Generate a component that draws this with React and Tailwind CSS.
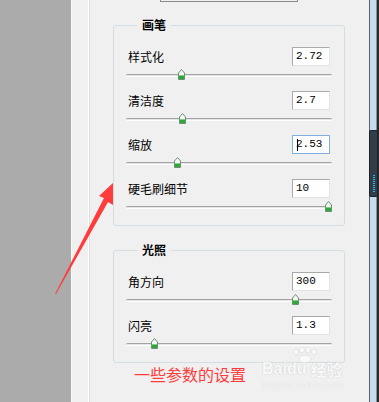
import React from "react";

const cjk = { fontFamily: '"Noto Sans CJK SC", "Noto Sans", sans-serif' };

function Thumb({ left }) {
  return (
    <svg
      width="7"
      height="11"
      viewBox="0 0 7 11"
      className="absolute top-[-6px]"
      style={{ left }}
    >
      <path d="M3.5 0.5 L6.5 4 V10.5 H0.5 V4 Z" fill="#f4f8f4" stroke="#6f8f73" />
      <rect x="1" y="6" width="5" height="4" fill="#2fa83a" />
      <rect x="1" y="6" width="5" height="1" fill="#7fd080" />
    </svg>
  );
}

function Row({ label, value, pos, focused }) {
  return (
    <div className="flex flex-col">
      <div className="flex h-[19px] items-center justify-between">
        <span className="text-[12px] leading-[12px] text-black" style={cjk}>
          {label}
        </span>
        <div
          className={`relative flex h-[19px] w-[38px] items-center bg-white pl-[3px] font-['Liberation_Mono',monospace] text-[11px] text-black border ${
            focused
              ? "border-[#7fb0e0]"
              : "border-[#a9a9a9] border-r-[#e2e2e2] border-b-[#e2e2e2]"
          }`}
        >
          {focused && <span className="absolute left-[4px] top-[3px] h-[12px] w-px bg-black" />}
          {value}
        </div>
      </div>
      <div className="h-[25px] pt-[8px]">
        <div className="relative -mx-[2px] h-[3px] rounded-full border-t border-[#a3a3a3] border-b border-b-white bg-[#e4e4e4]">
          <Thumb left={pos} />
        </div>
      </div>
    </div>
  );
}

function Group({ title, children, className = "" }) {
  return (
    <fieldset
      className={`ml-[23px] w-[232px] rounded-[3px] border border-[#d3dde4] px-[14px] pt-[16px] pb-[2px] ${className}`}
    >
      <legend
        className="ml-[9px] px-[5px] text-[12px] font-bold leading-[12px] text-black"
        style={cjk}
      >
        {title}
      </legend>
      {children}
    </fieldset>
  );
}

export default function App() {
  return (
    <div className="relative flex h-[402px] w-[379px] overflow-hidden bg-[#f0f0f0]">
      <div className="w-[71px] shrink-0 bg-[#ababab]" />
      <div className="w-px shrink-0 bg-[#fafafa]" />
      <div className="w-[16px] shrink-0 bg-[#f0f0f0]" />
      <div className="w-px shrink-0 bg-white" />
      <div className="w-px shrink-0 bg-[#dedede]" />

      <div className="flex w-[279px] shrink-0 flex-col">
        <div className="ml-[70px] h-[2px] w-[138px] border-x border-b border-[#8a8a8a]" />

        <Group title="画笔" className="mt-[17px]">
          <Row label="样式化" value="2.72" pos={52} />
          <Row label="清洁度" value="2.7" pos={53} />
          <Row label="缩放" value="2.53" pos={48} focused />
          <Row label="硬毛刷细节" value="10" pos={199} />
        </Group>

        <Group title="光照" className="mt-[18px]">
          <Row label="角方向" value="300" pos={166} />
          <Row label="闪亮" value="1.3" pos={25} />
        </Group>

        <div className="ml-[44px] mt-[1px] text-[16px] leading-[20px] text-[#ff3c3c]" style={cjk}>
          一些参数的设置
        </div>
      </div>

      <div className="w-px shrink-0 bg-[#56606a]" />
      <div className="w-[6px] shrink-0 bg-[#c6daf0]" />
      <div className="w-px shrink-0 bg-[#8a8a8a]" />
      <div className="w-[2px] shrink-0 bg-[#2a2a2a]" />

      {/* scrollbar thumb */}
      <div className="absolute left-[369px] top-[130px] flex h-[67px] w-[9px] flex-col items-center rounded-[2px] border border-[#1c232a] bg-[#333d47] pt-[44px]">
        <div className="flex flex-col gap-[1px]">
          {[0, 1, 2, 3, 4, 5, 6, 7, 8].map((i) => (
            <div key={i} className="h-px w-[2px] bg-[#29b6f6]" />
          ))}
        </div>
      </div>

      {/* red arrow annotation */}
      <svg className="pointer-events-none absolute left-0 top-0" width="379" height="402">
        <polygon
          points="113,183 99,196 104,198 55,294 56,294 108,202 113,205"
          fill="#ff3b3b"
        />
      </svg>

      {/* watermark */}
      <div className="pointer-events-none absolute left-[262px] top-[347px] flex flex-col items-start opacity-60">
        <svg width="28" height="16" viewBox="0 0 28 16" className="ml-[28px]">
          <g fill="#ffffff" stroke="#d4d4d4" strokeWidth="0.8">
            <ellipse cx="6" cy="5" rx="2.5" ry="3" />
            <ellipse cx="12" cy="3" rx="2.5" ry="3" />
            <ellipse cx="18" cy="3" rx="2.5" ry="3" />
            <ellipse cx="24" cy="5" rx="2.5" ry="3" />
            <ellipse cx="15" cy="12" rx="6" ry="4" />
          </g>
        </svg>
        <div
          className="-mt-[2px] flex items-end text-[16px] font-bold leading-[16px] text-white [text-shadow:0_0_1px_#b8b8b8,0_0_1px_#b8b8b8]"
          style={{ fontFamily: '"Liberation Sans", "Noto Sans CJK SC", sans-serif' }}
        >
          <span>Baidu</span>
          <span className="ml-[4px]" style={cjk}>经验</span>
        </div>
        <div className="mt-[3px] font-['Liberation_Sans',sans-serif] text-[9px] leading-[10px] tracking-[0.5px] text-white [text-shadow:0_0_1px_#b8b8b8]">
          jingyan.baidu.com
        </div>
      </div>
    </div>
  );
}
